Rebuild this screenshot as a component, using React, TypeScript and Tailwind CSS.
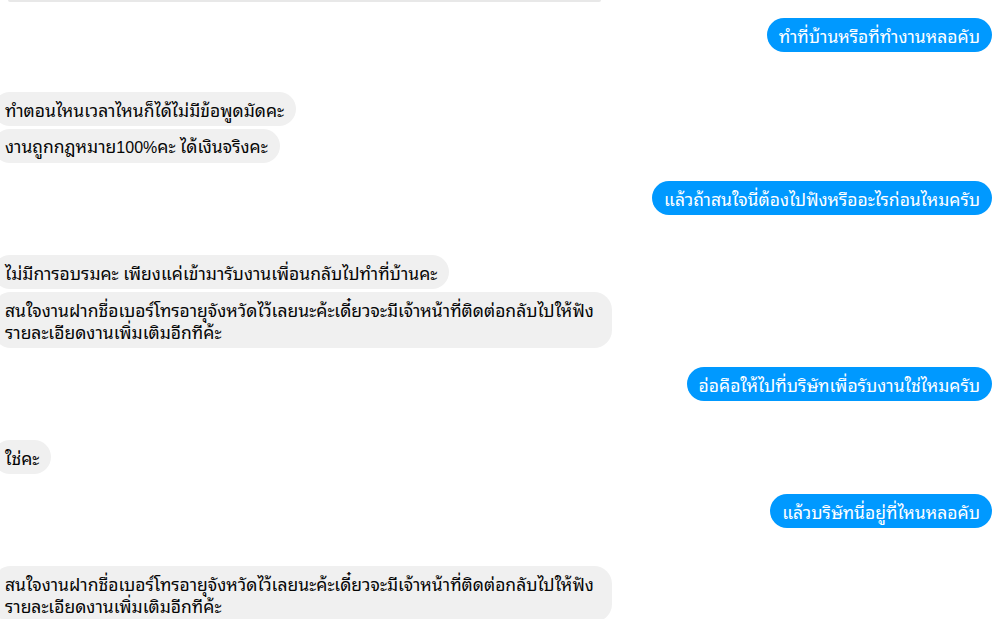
import React from "react";

function Me({ text, className = "" }: { text: string; className?: string }) {
  return (
    <div className={`flex justify-end pr-[13px] ${className}`}>
      <div className="bg-[#0099ff] text-white rounded-[18px] px-[12px] h-[34px] flex items-center text-[17.5px] leading-[20px] whitespace-nowrap">
        {text}
      </div>
    </div>
  );
}

function Them({
  children,
  className = "",
  tall = false,
}: {
  children: React.ReactNode;
  className?: string;
  tall?: boolean;
}) {
  return (
    <div className={`flex justify-start ml-[-7px] ${className}`}>
      <div
        className={`bg-[#f0f0f0] text-[#050505] rounded-[18px] text-[17.5px] whitespace-nowrap ${
          tall ? "pl-[12px] pr-[18px] py-[6px] leading-[22px]" : "px-[12px] h-[34px] flex items-center leading-[20px]"
        }`}
      >
        {children}
      </div>
    </div>
  );
}

export default function App() {
  return (
    <div className="w-[1005px] h-[619px] overflow-hidden bg-white font-['Noto_Sans_Thai_Looped','Noto_Sans_Thai','Liberation_Sans',sans-serif]">
      <div className="ml-[8px] w-[593px] h-[2px] bg-[#e8e8e8] rounded-b-[2px]" />
      <Me text="ทำที่บ้านหรือที่ทำงานหลอคับ" className="mt-[16px]" />
      <Them className="mt-[40px]">ทำตอนไหนเวลาไหนก็ได้ไม่มีข้อพูดมัดคะ</Them>
      <Them className="mt-[3px]">
        <span>
          งานถูกกฎหมาย<span className="font-['Liberation_Sans',sans-serif] text-[16px]">100%</span>คะ ได้เงินจริงคะ
        </span>
      </Them>
      <Me text="แล้วถ้าสนใจนี่ต้องไปฟังหรืออะไรก่อนไหมครับ" className="mt-[18px]" />
      <Them className="mt-[40px]">ไม่มีการอบรมคะ เพียงแค่เข้ามารับงานเพื่อนกลับไปทำที่บ้านคะ</Them>
      <Them className="mt-[3px]" tall>
        สนใจงานฝากชื่อเบอร์โทรอายุจังหวัดไว้เลยนะค้ะเดี๋ยวจะมีเจ้าหน้าที่ติดต่อกลับไปให้ฟัง
        <br />
        รายละเอียดงานเพิ่มเติมอีกทีค้ะ
      </Them>
      <Me text="อ่อคือให้ไปที่บริษัทเพื่อรับงานใช่ไหมครับ" className="mt-[19px]" />
      <Them className="mt-[39px]">ใช่คะ</Them>
      <Me text="แล้วบริษัทนี่อยู่ที่ไหนหลอคับ" className="mt-[20px]" />
      <Them className="mt-[38px]" tall>
        สนใจงานฝากชื่อเบอร์โทรอายุจังหวัดไว้เลยนะค้ะเดี๋ยวจะมีเจ้าหน้าที่ติดต่อกลับไปให้ฟัง
        <br />
        รายละเอียดงานเพิ่มเติมอีกทีค้ะ
      </Them>
    </div>
  );
}
